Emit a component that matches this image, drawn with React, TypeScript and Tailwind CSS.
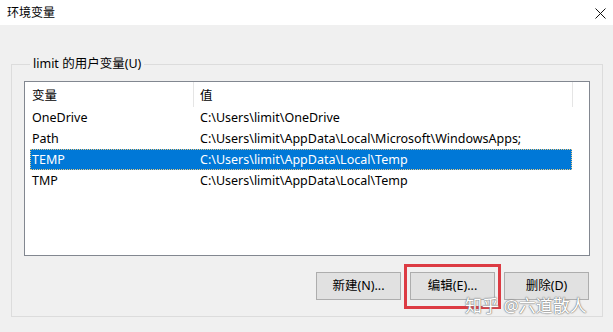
import React from 'react'

const FONT = { fontFamily: '"Noto Sans", "Noto Sans CJK SC", sans-serif' }

const rows = [
  { name: 'OneDrive', value: 'C:\\Users\\limit\\OneDrive' },
  { name: 'Path', value: 'C:\\Users\\limit\\AppData\\Local\\Microsoft\\WindowsApps;' },
  { name: 'TEMP', value: 'C:\\Users\\limit\\AppData\\Local\\Temp', selected: true },
  { name: 'TMP', value: 'C:\\Users\\limit\\AppData\\Local\\Temp' },
]

function WinButton({ label }: { label: string }) {
  return (
    <button className="h-[28px] w-[85px] border border-[#adadad] bg-[#e1e1e1] text-[12.5px] text-black">
      {label}
    </button>
  )
}

export default function App() {
  return (
    <div className="relative h-[332px] w-[613px] overflow-hidden bg-[#f0f0f0] text-black" style={FONT}>
      {/* title bar */}
      <div className="flex h-[25px] items-center justify-between bg-white pl-[7px] pr-[7px]">
        <span className="text-[12px]">环境变量</span>
        <svg width="11" height="11" viewBox="0 0 11 11" className="mt-[1px]">
          <path d="M0.5 0.5 L10.5 10.5 M10.5 0.5 L0.5 10.5" stroke="#111" strokeWidth="1" />
        </svg>
      </div>

      <fieldset className="mt-[31px] ml-[11px] mr-[10px] border border-[#dcdcdc] px-[12px] pb-[16px] pt-[9px]">
        <legend className="ml-[6px] px-[3px] text-[12.5px] leading-[16px]">limit 的用户变量(U)</legend>

        {/* list view */}
        <div className="h-[175px] border border-[#828790] bg-white text-[12.5px]">
          <div className="flex h-[25px] items-center">
            <div className="flex h-full w-[168px] items-center pl-[7px] pt-[3px]">变量</div>
            <div className="h-full w-px bg-[#e5e5e5]" />
            <div className="flex h-full w-[378px] items-center pl-[6px] pt-[3px]">值</div>
            <div className="h-full w-px bg-[#e5e5e5]" />
          </div>
          {rows.map((r) => (
            <div
              key={r.name}
              className={
                r.selected
                  ? 'ml-[5px] flex h-[21px] w-[542px] items-center pt-[2px] bg-[#0078d7] text-white outline-1 -outline-offset-1 outline-dotted outline-[#e9c983]'
                  : 'ml-[5px] flex h-[21px] w-[542px] items-center pt-[2px]'
              }
            >
              <div className="w-[170px] pl-[2px]">{r.name}</div>
              <div className="whitespace-nowrap">{r.value}</div>
            </div>
          ))}
        </div>

        {/* buttons */}
        <div className="mt-[16px] mr-[1px] flex justify-end gap-[9px]">
          <WinButton label="新建(N)..." />
          <div className="relative">
            <WinButton label="编辑(E)..." />
            <span className="pointer-events-none absolute -top-[8px] -bottom-[9px] -left-[6px] -right-[6px] border-[3px] border-[#dc3b43]" />
          </div>
          <WinButton label="删除(D)" />
        </div>
      </fieldset>

      {/* watermark */}
      <div
        className="pointer-events-none absolute left-[465px] top-[297px] text-[17px] leading-[17px] text-white"
        style={{ textShadow: '0 0 1px #777, 0 0 1px #777, 0 0 2px #999' }}
      >
        知乎 @六道散人
      </div>
    </div>
  )
}
